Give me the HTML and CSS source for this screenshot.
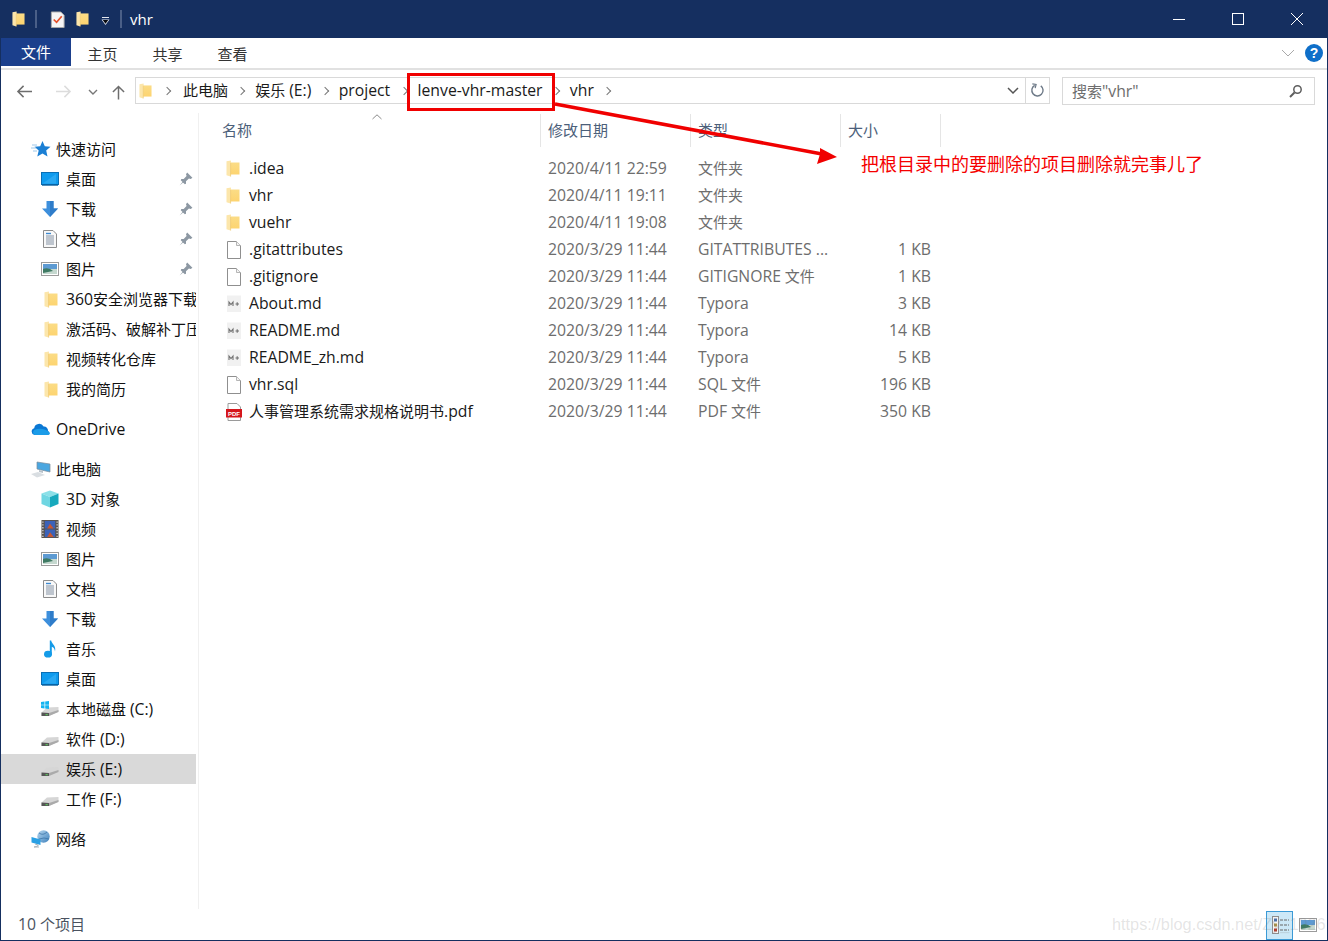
FILE: index.html
```html
<!DOCTYPE html>
<html lang="zh-CN">
  <head>
    <meta charset="UTF-8" />
    <meta name="viewport" content="width=device-width, initial-scale=1.0" />
    <title>vhr</title>
    <link rel="stylesheet" href="styles.css">
  </head>
  <body>
    <svg class="defs" width="0" height="0">
      <defs>
        <linearGradient id="folder-fill" x1="0" y1="0" x2="0" y2="1">
          <stop offset="0" stop-color="#fbdc86" />
          <stop offset="1" stop-color="#fdd470" />
        </linearGradient>
        <linearGradient id="globe-fill" x1="0" y1="0" x2="1" y2="1">
          <stop offset="0" stop-color="#b5d6ef" />
          <stop offset="1" stop-color="#3f82bd" />
        </linearGradient>
        <symbol id="i-folder" viewBox="0 0 14 17">
          <path d="M4 2.5 H13.5 V14.5 H4 Z" fill="url(#folder-fill)" />
          <path d="M0.5 1.2 L5 0.5 V2.8 L4.6 16.5 L0.5 15.2 Z" fill="#fce6ab" />
          <path d="M4.6 2.8 V16.5" stroke="#eec76c" stroke-width="0.7" />
        </symbol>
        <symbol id="i-file" viewBox="0 0 16 18">
          <path d="M1.5 0.5 H10.5 L14.5 4.5 V17.5 H1.5 Z" fill="#fff" stroke="#8f8f8f" />
          <path d="M10.5 0.5 V4.5 H14.5" fill="#f3f3f3" stroke="#b5b5b5" />
        </symbol>
        <symbol id="i-md" viewBox="0 0 16 18">
          <path d="M1 0.5 H15 V17 H1 Z" fill="#f1f1f1" />
          <path d="M3 11 V7 L5 9.5 L7 7 V11 M9.5 9 H13 M11.2 7.2 V10.8" fill="none" stroke="#707070" stroke-width="1.1" />
        </symbol>
        <symbol id="i-pdf" viewBox="0 0 16 18">
          <path d="M2 0.5 H11 L14.5 4 V17.5 H2 Z" fill="#fff" stroke="#9a9a9a" />
          <rect x="0" y="6" width="16" height="8.5" fill="#d5161c" />
          <text x="8" y="12.7" class="pdf-label">PDF</text>
        </symbol>
        <symbol id="i-star" viewBox="0 0 20 18">
          <path d="M11.5 1 L13.8 6.2 L19.5 6.8 L15.2 10.5 L16.5 16.5 L11.5 13.5 L6.3 16.5 L7.7 10.5 L3.5 6.8 L9.2 6.2 Z" fill="#1b7fd4" />
          <path d="M1 5 H6 M0 8 H5 M2 11 H6" stroke="#9cc7ea" stroke-width="1" />
        </symbol>
        <symbol id="i-desktop" viewBox="0 0 18 14">
          <rect x="0.5" y="0.5" width="17" height="12" fill="#0f9bee" stroke="#0a6fb5" />
          <path d="M1 12 L15 2 V11.5 H1 Z" fill="#2aa8f2" />
          <path d="M1 13 H17" stroke="#075f9e" stroke-width="1.4" />
        </symbol>
        <symbol id="i-down" viewBox="0 0 18 18">
          <path d="M5.5 1 H12.5 V8.5 H17 L9 17 L1 8.5 H5.5 Z" fill="#3d8fdc" />
          <path d="M9 1 H12.5 V8.5 H17 L9 17 Z" fill="#2f7cc9" />
        </symbol>
        <symbol id="i-doc" viewBox="0 0 16 18">
          <path d="M1.5 0.5 H11 L14.5 4 V17.5 H1.5 Z" fill="#f8f8f8" stroke="#8c8c8c" />
          <path d="M4 6 H12 M4 8 H12 M4 10 H12 M4 12 H12 M4 14 H12" stroke="#8492a4" stroke-width="1" />
          <path d="M4 3.5 H9" stroke="#3f8ad0" stroke-width="1.4" />
        </symbol>
        <symbol id="i-picture" viewBox="0 0 18 14">
          <rect x="0.5" y="0.5" width="17" height="13" fill="#fff" stroke="#9b9b9b" />
          <rect x="2" y="2" width="14" height="5" fill="#5d9ad2" />
          <rect x="2" y="7" width="14" height="5" fill="#c5d8cf" />
          <path d="M2 7 Q8 5 12 9 L2 11 Z" fill="#3e7a63" />
        </symbol>
        <symbol id="i-cloud" viewBox="0 0 20 14">
          <path d="M3.5 13 A3.5 3.5 0 0 1 3.2 6.2 A5 5 0 0 1 12.6 4.6 A4 4 0 0 1 17 9 A2.2 2.2 0 0 1 17 13 Z" fill="#0a78d4" />
          <path d="M3.5 13 A3.5 3.5 0 0 1 3.2 8 C8 6 14 6 19 11 A2.2 2.2 0 0 1 17 13 Z" fill="#1b9ce8" />
        </symbol>
        <symbol id="i-pc" viewBox="0 0 20 18">
          <path d="M6 2 L19 4 V12 L6 9 Z" fill="#4aa6e0" stroke="#7b8b99" stroke-width="0.7" />
          <path d="M8 10 L12 11 V13 L8 12 Z" fill="#b9c2ca" />
          <path d="M0 14 L7 12 L14 15 L6 17.5 Z" fill="#d9dee2" />
        </symbol>
        <symbol id="i-cube" viewBox="0 0 18 18">
          <path d="M9 0.5 L17.5 3.5 L9 7 L0.5 3.5 Z" fill="#8be0e8" />
          <path d="M0.5 3.5 L9 7 V17.5 L0.5 14 Z" fill="#6fd6e2" />
          <path d="M17.5 3.5 L9 7 V17.5 L17.5 14 Z" fill="#16a9bd" />
        </symbol>
        <symbol id="i-film" viewBox="0 0 18 19">
          <rect x="0" y="0" width="18" height="19" fill="#59534e" />
          <rect x="3.5" y="1" width="11" height="8" fill="#3c62b8" />
          <rect x="3.5" y="10" width="11" height="8" fill="#3c62b8" />
          <path d="M6 9 L9 4 L13 9 Z M6 18 L9 13 L13 18 Z" fill="#c9572f" />
          <path d="M1.5 1.5 V18 M16.5 1.5 V18" stroke="#e6e6e6" stroke-width="1.2" stroke-dasharray="1.4 1.6" />
        </symbol>
        <symbol id="i-music" viewBox="0 0 12 18">
          <ellipse cx="4" cy="14.2" rx="4" ry="3.4" fill="#149be8" />
          <path d="M5.8 14.5 V0.5 H7.2 C7.6 4 12.5 5.5 11 11.5 C10.5 8 9 7.3 7.8 6.8 V14.5 Z" fill="#149be8" />
        </symbol>
        <symbol id="i-drive" viewBox="0 0 18 10">
          <path d="M0.5 6 L6 1 L17.5 0.5 V5 L8 9.5 H0.5 Z" fill="#d6d6d6" />
          <path d="M8 6.4 L17.5 3.6 V5.4 L8 9.5 Z" fill="#aaa" />
          <path d="M0.5 6 L8 6.4 V9.5 H0.5 Z" fill="#565656" />
          <path d="M4.5 8.2 H6.8" stroke="#5fd05f" stroke-width="1" />
        </symbol>
        <symbol id="i-win" viewBox="0 0 8 8">
          <path d="M0 1 L3.5 0.5 V3.7 H0 Z M4.2 0.4 L8 0 V3.7 H4.2 Z M0 4.3 H3.5 V7.5 L0 7 Z M4.2 4.3 H8 V8 L4.2 7.6 Z" fill="#14b4f0" />
        </symbol>
        <symbol id="i-net" viewBox="0 0 20 18">
          <circle cx="12.5" cy="6.5" r="6.2" fill="url(#globe-fill)" />
          <path d="M8 3 Q12 6 16 2 M8 9 Q13 7 18 9" stroke="#3d76a8" fill="none" stroke-width="0.8" />
          <path d="M0.5 7 L9.5 9.5 V15 L0.5 12.5 Z" fill="#2aa0e4" />
          <path d="M4 14 L7 15 V16 L3 17 L8 17" fill="none" stroke="#a9b4bc" />
        </symbol>
        <symbol id="i-pin" viewBox="0 0 12 12">
          <path d="M7 0.5 L11.5 5 L10 6 L8.5 5.5 L6 8 L6 10 L5 10.5 L1.5 7 L2 6 L4 6 L6.5 3.5 L6 2 Z M3 8.5 L0.5 11.5 L3.5 9" fill="#8d98a3" />
        </symbol>
        <symbol id="i-task" viewBox="0 0 15 18">
          <path d="M1 1 H11 L14.5 4.5 V17.5 H1 Z" fill="#f5f5f5" stroke="#a8a8a8" />
          <path d="M3.5 9 L6.5 12 L12 5.5" fill="none" stroke="#e5502a" stroke-width="1.8" />
        </symbol>
      </defs>
    </svg>

    <div class="window">
      <header class="titlebar">
        <svg class="tb-folder"><use href="#i-folder" /></svg>
        <span class="tb-sep"></span>
        <svg class="tb-task"><use href="#i-task" /></svg>
        <svg class="tb-folder tb-folder2"><use href="#i-folder" /></svg>
        <svg class="tb-drop" viewBox="0 0 9 9"><path d="M1 0.5 H8" stroke="#e6e9f0" /><path d="M0.5 2.5 H8.5 L4.5 8 Z" fill="#e6e9f0" /><path d="M1.8 3 H7.2 L4.5 6.8 Z" fill="#05070c" /></svg>
        <span class="tb-sep"></span>
        <span class="tb-title">vhr</span>
        <div class="win-btns">
          <svg class="win-btn" viewBox="0 0 14 14"><path d="M1 7.5 H13" stroke="#fff" /></svg>
          <svg class="win-btn" viewBox="0 0 14 14"><rect x="1.5" y="1.5" width="11" height="11" fill="none" stroke="#fff" /></svg>
          <svg class="win-btn" viewBox="0 0 14 14"><path d="M1 1 L13 13 M13 1 L1 13" stroke="#fff" /></svg>
        </div>
      </header>

      <nav class="ribbon">
        <a class="tab tab-file">文件</a>
        <a class="tab">主页</a>
        <a class="tab">共享</a>
        <a class="tab">查看</a>
        <svg class="ribbon-chevron" viewBox="0 0 14 8"><path d="M1 1 L7 7 L13 1" fill="none" stroke="#a9a9a9" /></svg>
        <span class="help">?</span>
      </nav>

      <div class="addressbar">
        <svg class="nav-icon" viewBox="0 0 18 16"><path d="M17 8 H2 M8 2 L2 8 L8 14" fill="none" stroke="#6e6e6e" stroke-width="1.6" /></svg>
        <svg class="nav-icon nav-forward" viewBox="0 0 18 16"><path d="M1 8 H16 M10 2 L16 8 L10 14" fill="none" stroke="#dcdcdc" stroke-width="1.6" /></svg>
        <svg class="nav-drop" viewBox="0 0 10 6"><path d="M1 1 L5 5 L9 1" fill="none" stroke="#777" stroke-width="1.4" /></svg>
        <svg class="nav-up" viewBox="0 0 14 16"><path d="M7 16 V2 M1 8 L7 2 L13 8" fill="none" stroke="#6e6e6e" stroke-width="1.6" /></svg>

        <div class="path-box">
          <svg class="path-folder"><use href="#i-folder" /></svg>
          <span class="crumb-sep first"></span>
          <span class="crumb">此电脑</span>
          <span class="crumb-sep"></span>
          <span class="crumb">娱乐 <span class="en">(E:)</span></span>
          <span class="crumb-sep"></span>
          <span class="crumb en">project</span>
          <span class="crumb-sep"></span>
          <span class="crumb en">lenve-vhr-master</span>
          <span class="crumb-sep"></span>
          <span class="crumb en">vhr</span>
          <span class="crumb-sep"></span>
          <svg class="path-drop" viewBox="0 0 12 8"><path d="M1 1 L6 6 L11 1" fill="none" stroke="#555" stroke-width="1.5" /></svg>
          <span class="path-refresh">
            <svg viewBox="0 0 16 16"><path d="M5 2.6 A6 6 0 1 0 11.5 3" fill="none" stroke="#6e7a88" stroke-width="1.5" /><path d="M2.5 1 L6.5 1.5 L5.5 5.5" fill="none" stroke="#6e7a88" stroke-width="1.3" /></svg>
          </span>
        </div>

        <div class="search-box">
          <span>搜索<span class="en">"vhr"</span></span>
          <svg viewBox="0 0 14 14"><circle cx="8.5" cy="5.5" r="3.7" fill="none" stroke="#5e5e5e" stroke-width="1.5" /><path d="M5.5 8.5 L1 13" stroke="#5e5e5e" stroke-width="2" /></svg>
        </div>
      </div>

      <div class="main">
        <aside class="sidebar">
          <ul class="nav-group">
            <li class="nav-head"><svg class="ico-star"><use href="#i-star" /></svg>快速访问</li>
            <li class="nav-item"><svg class="ico-wide"><use href="#i-desktop" /></svg>桌面<svg class="pin"><use href="#i-pin" /></svg></li>
            <li class="nav-item"><svg class="ico-wide ico-tall"><use href="#i-down" /></svg>下载<svg class="pin"><use href="#i-pin" /></svg></li>
            <li class="nav-item"><svg class="ico-wide ico-tall"><use href="#i-doc" /></svg>文档<svg class="pin"><use href="#i-pin" /></svg></li>
            <li class="nav-item"><svg class="ico-wide"><use href="#i-picture" /></svg>图片<svg class="pin"><use href="#i-pin" /></svg></li>
            <li class="nav-item"><svg class="ico-folder"><use href="#i-folder" /></svg><span class="clip nudge"><span class="en">360</span>安全浏览器下载</span></li>
            <li class="nav-item"><svg class="ico-folder"><use href="#i-folder" /></svg><span class="clip">激活码、破解补丁压缩包</span></li>
            <li class="nav-item"><svg class="ico-folder"><use href="#i-folder" /></svg>视频转化仓库</li>
            <li class="nav-item"><svg class="ico-folder"><use href="#i-folder" /></svg>我的简历</li>
          </ul>
          <ul class="nav-group">
            <li class="nav-head"><svg class="ico-star"><use href="#i-cloud" /></svg><span class="en nudge">OneDrive</span></li>
          </ul>
          <ul class="nav-group">
            <li class="nav-head"><svg class="ico-star"><use href="#i-pc" /></svg>此电脑</li>
            <li class="nav-item"><svg class="ico-wide ico-tall"><use href="#i-cube" /></svg><span class="nudge"><span class="en">3D</span> 对象</span></li>
            <li class="nav-item"><svg class="ico-wide ico-tall"><use href="#i-film" /></svg>视频</li>
            <li class="nav-item"><svg class="ico-wide"><use href="#i-picture" /></svg>图片</li>
            <li class="nav-item"><svg class="ico-wide ico-tall"><use href="#i-doc" /></svg>文档</li>
            <li class="nav-item"><svg class="ico-wide ico-tall"><use href="#i-down" /></svg>下载</li>
            <li class="nav-item"><svg class="ico-wide ico-tall"><use href="#i-music" /></svg>音乐</li>
            <li class="nav-item"><svg class="ico-wide"><use href="#i-desktop" /></svg>桌面</li>
            <li class="nav-item"><svg class="ico-wide ico-drive"><use href="#i-drive" /></svg><svg class="ico-win"><use href="#i-win" /></svg><span class="nudge">本地磁盘 <span class="en">(C:)</span></span></li>
            <li class="nav-item"><svg class="ico-wide ico-drive"><use href="#i-drive" /></svg><span class="nudge">软件 <span class="en">(D:)</span></span></li>
            <li class="nav-item selected"><svg class="ico-wide ico-drive"><use href="#i-drive" /></svg><span class="nudge">娱乐 <span class="en">(E:)</span></span></li>
            <li class="nav-item"><svg class="ico-wide ico-drive"><use href="#i-drive" /></svg><span class="nudge">工作 <span class="en">(F:)</span></span></li>
          </ul>
          <ul class="nav-group">
            <li class="nav-head"><svg class="ico-star"><use href="#i-net" /></svg>网络</li>
          </ul>
        </aside>

        <section class="files">
          <div class="file-head">
            <span class="col col-name">名称<svg class="sort" viewBox="0 0 10 6"><path d="M0.5 5 L5 0.8 L9.5 5" fill="none" stroke="#8a8a8a" /></svg></span>
            <span class="col col-date">修改日期</span>
            <span class="col col-type">类型</span>
            <span class="col col-size">大小</span>
          </div>
          <ul class="file-list">
            <li class="file-row"><span class="cell-name"><svg class="ico-folder"><use href="#i-folder" /></svg><span class="en">.idea</span></span><span class="cell-date">2020/4/11 22:59</span><span class="cell-type">文件夹</span><span class="cell-size"></span></li>
            <li class="file-row"><span class="cell-name"><svg class="ico-folder"><use href="#i-folder" /></svg><span class="en">vhr</span></span><span class="cell-date">2020/4/11 19:11</span><span class="cell-type">文件夹</span><span class="cell-size"></span></li>
            <li class="file-row"><span class="cell-name"><svg class="ico-folder"><use href="#i-folder" /></svg><span class="en">vuehr</span></span><span class="cell-date">2020/4/11 19:08</span><span class="cell-type">文件夹</span><span class="cell-size"></span></li>
            <li class="file-row"><span class="cell-name"><svg class="file-ico"><use href="#i-file" /></svg><span class="en">.gitattributes</span></span><span class="cell-date">2020/3/29 11:44</span><span class="cell-type en">GITATTRIBUTES ...</span><span class="cell-size">1 KB</span></li>
            <li class="file-row"><span class="cell-name"><svg class="file-ico"><use href="#i-file" /></svg><span class="en">.gitignore</span></span><span class="cell-date">2020/3/29 11:44</span><span class="cell-type"><span class="en">GITIGNORE</span> 文件</span><span class="cell-size">1 KB</span></li>
            <li class="file-row"><span class="cell-name"><svg class="file-ico"><use href="#i-md" /></svg><span class="en">About.md</span></span><span class="cell-date">2020/3/29 11:44</span><span class="cell-type en">Typora</span><span class="cell-size">3 KB</span></li>
            <li class="file-row"><span class="cell-name"><svg class="file-ico"><use href="#i-md" /></svg><span class="en">README.md</span></span><span class="cell-date">2020/3/29 11:44</span><span class="cell-type en">Typora</span><span class="cell-size">14 KB</span></li>
            <li class="file-row"><span class="cell-name"><svg class="file-ico"><use href="#i-md" /></svg><span class="en">README_zh.md</span></span><span class="cell-date">2020/3/29 11:44</span><span class="cell-type en">Typora</span><span class="cell-size">5 KB</span></li>
            <li class="file-row"><span class="cell-name"><svg class="file-ico"><use href="#i-file" /></svg><span class="en">vhr.sql</span></span><span class="cell-date">2020/3/29 11:44</span><span class="cell-type"><span class="en">SQL</span> 文件</span><span class="cell-size">196 KB</span></li>
            <li class="file-row"><span class="cell-name"><svg class="file-ico"><use href="#i-pdf" /></svg><span>人事管理系统需求规格说明书<span class="en">.pdf</span></span></span><span class="cell-date">2020/3/29 11:44</span><span class="cell-type"><span class="en">PDF</span> 文件</span><span class="cell-size">350 KB</span></li>
          </ul>
        </section>
      </div>

      <footer class="statusbar">
        <span class="status-count"><span class="en">10</span> 个项目</span>
        <span class="view-btn active">
          <svg viewBox="0 0 20 22">
            <rect x="2.5" y="2.5" width="6" height="17" fill="#f4f4f4" stroke="#8d8d8d" />
            <rect x="4" y="4.5" width="3" height="3" fill="#4a6fa5" />
            <rect x="4" y="9.5" width="3" height="3" fill="#a8914a" />
            <rect x="4" y="14.5" width="3" height="3" fill="#b23a2a" />
            <path d="M10 6 H19 M10 11 H19 M10 16 H19" stroke="#666" stroke-width="1.2" stroke-dasharray="3 1" />
          </svg>
        </span>
        <svg class="view-large"><use href="#i-picture" /></svg>
      </footer>
    </div>

    <!-- annotations pasted on top of the screenshot -->
    <div class="mark-box"></div>
    <svg class="mark-arrow" viewBox="0 0 1328 941">
      <path d="M555 104 L822 154" stroke="#f00000" stroke-width="3.5" />
      <path d="M837 157 L817 164 L820 154 L820 148 Z" fill="#f00000" />
    </svg>
    <div class="mark-note">把根目录中的要删除的项目删除就完事儿了</div>
    <div class="watermark">https://blog.csdn.net/Zy_1026</div>
  </body>
</html>
```

FILE: styles.css
```css
* {
  box-sizing: border-box;
}
html,
body {
  margin: 0;
  padding: 0;
  height: 100%;
  overflow: hidden;
  background: #fff;
}
body {
  position: relative;
  font-family: "Open Sans", "Noto Sans CJK SC", sans-serif;
  font-size: 15px;
  color: #1a1a1a;
}
ul {
  list-style: none;
  margin: 0;
  padding: 0;
}
svg {
  display: block;
  flex: none;
}
.defs {
  position: absolute;
}
.pdf-label {
  font-family: "Liberation Sans", sans-serif;
  font-size: 6px;
  font-weight: bold;
  fill: #fff;
  text-anchor: middle;
}
/* latin text runs a bit wider than the CJK next to it */
.en {
  font-size: 15.75px;
}
.nudge {
  position: relative;
  top: 1px;
}

.window {
  display: flex;
  flex-direction: column;
  height: 941px;
  border-left: 1px solid #152f60;
  border-right: 1px solid #152f60;
  border-bottom: 1px solid #152f60;
}

/* title bar */
.titlebar {
  display: flex;
  align-items: center;
  height: 38px;
  margin: 0 -1px;
  padding-left: 12px;
  background: #152f60;
  color: #fff;
}
.tb-folder {
  width: 13px;
  height: 16px;
}
.tb-folder2 {
  margin-left: 11px;
}
.tb-task {
  width: 15px;
  height: 17px;
  margin-left: 13px;
}
.tb-drop {
  width: 9px;
  height: 9px;
  margin-left: 12px;
  margin-top: 5px;
}
.tb-sep {
  width: 2px;
  height: 18px;
  margin-left: 10px;
  background: #4a5f87;
}
.tb-sep + .tb-title {
  margin-left: 8px;
}
.tb-title {
  font-size: 15px;
}
.win-btns {
  display: flex;
  margin-left: auto;
  margin-right: 24px;
  gap: 45px;
}
.win-btn {
  width: 14px;
  height: 14px;
}

/* ribbon tabs */
.ribbon {
  display: flex;
  align-items: center;
  height: 32px;
  border-bottom: 2px solid #e1e1e1;
}
.tab {
  display: block;
  width: 65px;
  text-align: center;
  line-height: 28px;
  padding-top: 1px;
  font-size: 15px;
  color: #333;
}
.tab-file {
  width: 70px;
  height: 28px;
  padding-top: 0;
  background: #1b3f8c;
  color: #fff;
  margin-right: -1px;
  margin-bottom: 2px;
}
.ribbon-chevron {
  width: 14px;
  height: 8px;
  margin-left: auto;
  margin-right: 10px;
}
.help {
  width: 18px;
  height: 18px;
  margin-right: 4px;
  border-radius: 50%;
  background: #0f6fc9;
  color: #fff;
  font-family: "Liberation Sans", sans-serif;
  font-size: 14px;
  font-weight: bold;
  line-height: 18px;
  text-align: center;
}

/* address row */
.addressbar {
  display: flex;
  align-items: center;
  height: 43px;
  padding: 0 12px 2px 15px;
}
.nav-icon,
.nav-drop,
.nav-up {
  margin-top: 2px;
}
.nav-icon {
  width: 17px;
  height: 15px;
}
.nav-forward {
  margin-left: 22px;
}
.nav-drop {
  width: 10px;
  height: 6px;
  margin-left: 16px;
}
.nav-up {
  width: 13px;
  height: 16px;
  margin-left: 14px;
}
.path-box {
  display: flex;
  align-items: center;
  width: 915px;
  height: 27px;
  margin-left: 10px;
  padding-left: 3px;
  border: 1px solid #d9d9d9;
}
.path-folder {
  width: 13px;
  height: 16px;
}
.crumb {
  position: relative;
  top: -1px;
  font-size: 15px;
  white-space: nowrap;
}
.crumb.en {
  font-size: 15.75px;
}
.crumb-sep {
  width: 6px;
  height: 6px;
  margin: 0 11px 0 10.3px;
  border-top: 1.5px solid #777;
  border-right: 1.5px solid #777;
  transform: rotate(45deg);
}
.crumb-sep.first {
  margin-left: 12px;
  margin-right: 13px;
}
.path-drop {
  width: 12px;
  height: 8px;
  margin-left: auto;
  margin-right: 6px;
}
.path-refresh {
  display: flex;
  align-items: center;
  justify-content: center;
  width: 24px;
  height: 100%;
  border-left: 1px solid #d9d9d9;
}
.path-refresh svg {
  width: 15px;
  height: 15px;
}
.search-box {
  display: flex;
  align-items: center;
  justify-content: space-between;
  width: 253px;
  height: 28px;
  margin-left: 12px;
  padding: 0 11px 0 9px;
  border: 1px solid #d9d9d9;
  color: #6d6d6d;
  font-size: 15px;
}
.search-box svg {
  width: 14px;
  height: 14px;
}

/* left tree */
.main {
  display: flex;
  flex: 1;
  min-height: 0;
}
.sidebar {
  width: 198px;
  padding-top: 21px;
  margin-bottom: 1px;
  border-right: 1px solid #f0f0f0;
  color: #111;
}
.nav-group {
  margin-bottom: 10px;
}
.nav-head,
.nav-item {
  position: relative;
  display: flex;
  align-items: center;
  height: 30px;
  width: 195px;
  padding-bottom: 2px;
  white-space: nowrap;
  overflow: hidden;
}
.nav-head {
  padding-left: 30px;
}
.nav-item {
  padding-left: 40px;
}
.nav-item.selected {
  background: #d9d9d9;
}
.ico-star {
  width: 20px;
  height: 18px;
  margin-top: 2px;
  margin-right: 5px;
}
.ico-wide {
  width: 18px;
  height: 14px;
  margin-top: 2px;
  margin-right: 7px;
}
.ico-tall {
  height: 18px;
}
.ico-drive {
  height: 11px;
  margin-top: 7px;
}
.ico-folder {
  width: 14px;
  height: 17px;
  margin-top: 2px;
  margin-right: 9px;
}
.nav-item .ico-folder {
  margin-left: 3px;
  margin-right: 8px;
}
.ico-win {
  position: absolute;
  left: 40px;
  top: 7px;
  width: 8px;
  height: 8px;
}
.pin {
  position: absolute;
  right: 3px;
  top: 8px;
  width: 14px;
  height: 14px;
}
.clip {
  overflow: hidden;
  flex: 1;
}

/* file list */
.files {
  flex: 1;
  min-width: 0;
}
.file-head {
  display: flex;
  height: 34px;
  color: #4c607a;
  font-size: 15px;
}
.col {
  position: relative;
  display: flex;
  align-items: center;
  height: 33px;
  margin-top: 1px;
  padding-bottom: 3px;
  border-right: 1px solid #e5e5e5;
  padding-left: 7px;
}
.col-name {
  width: 342px;
  margin-left: 0;
  padding-left: 23px;
}
.col-date,
.col-type,
.col-size {
  width: 150px;
}
.col-size {
  width: 100px;
}
.sort {
  position: absolute;
  left: 173px;
  top: 0;
  width: 10px;
  height: 6px;
}
.file-list {
  padding-top: 8px;
}
.file-row {
  display: flex;
  align-items: center;
  height: 27px;
  padding-bottom: 2px;
  color: #6d6d6d;
  white-space: nowrap;
}
.cell-name {
  display: flex;
  align-items: center;
  width: 349px;
  padding-left: 27px;
  color: #1a1a1a;
}
.file-ico {
  width: 16px;
  height: 18px;
  margin-top: 2px;
  margin-right: 7px;
}
.cell-date {
  width: 150px;
  font-size: 15.75px;
}
.cell-type {
  width: 150px;
}
.cell-size {
  width: 83px;
  font-size: 15.75px;
  text-align: right;
}

/* status bar */
.statusbar {
  display: flex;
  align-items: center;
  height: 30px;
  padding-left: 17px;
  color: #4a5260;
}
.status-count {
  position: relative;
  top: -1px;
  font-size: 15px;
}
.view-btn {
  display: flex;
  align-items: center;
  justify-content: center;
  width: 27px;
  height: 29px;
  margin-left: auto;
  background: #cce8f7;
  border: 1px solid #3b9ad6;
}
.view-btn svg {
  width: 20px;
  height: 22px;
}
.view-large {
  width: 18px;
  height: 14px;
  margin-left: 6px;
  margin-right: 10px;
}

/* annotations */
.mark-box {
  position: absolute;
  left: 407px;
  top: 73px;
  width: 148px;
  height: 38px;
  border: 3px solid #f00000;
}
.mark-arrow {
  position: absolute;
  left: 0;
  top: 0;
  width: 1328px;
  height: 941px;
  pointer-events: none;
}
.mark-note {
  position: absolute;
  left: 861px;
  top: 150px;
  color: #f50000;
  font-family: "Noto Sans CJK SC", sans-serif;
  font-size: 18px;
  line-height: 26px;
  white-space: nowrap;
}
.watermark {
  position: absolute;
  left: 1112px;
  top: 915px;
  color: rgba(120, 120, 120, 0.2);
  font-family: "Liberation Sans", sans-serif;
  font-size: 16.3px;
  white-space: nowrap;
}
```
